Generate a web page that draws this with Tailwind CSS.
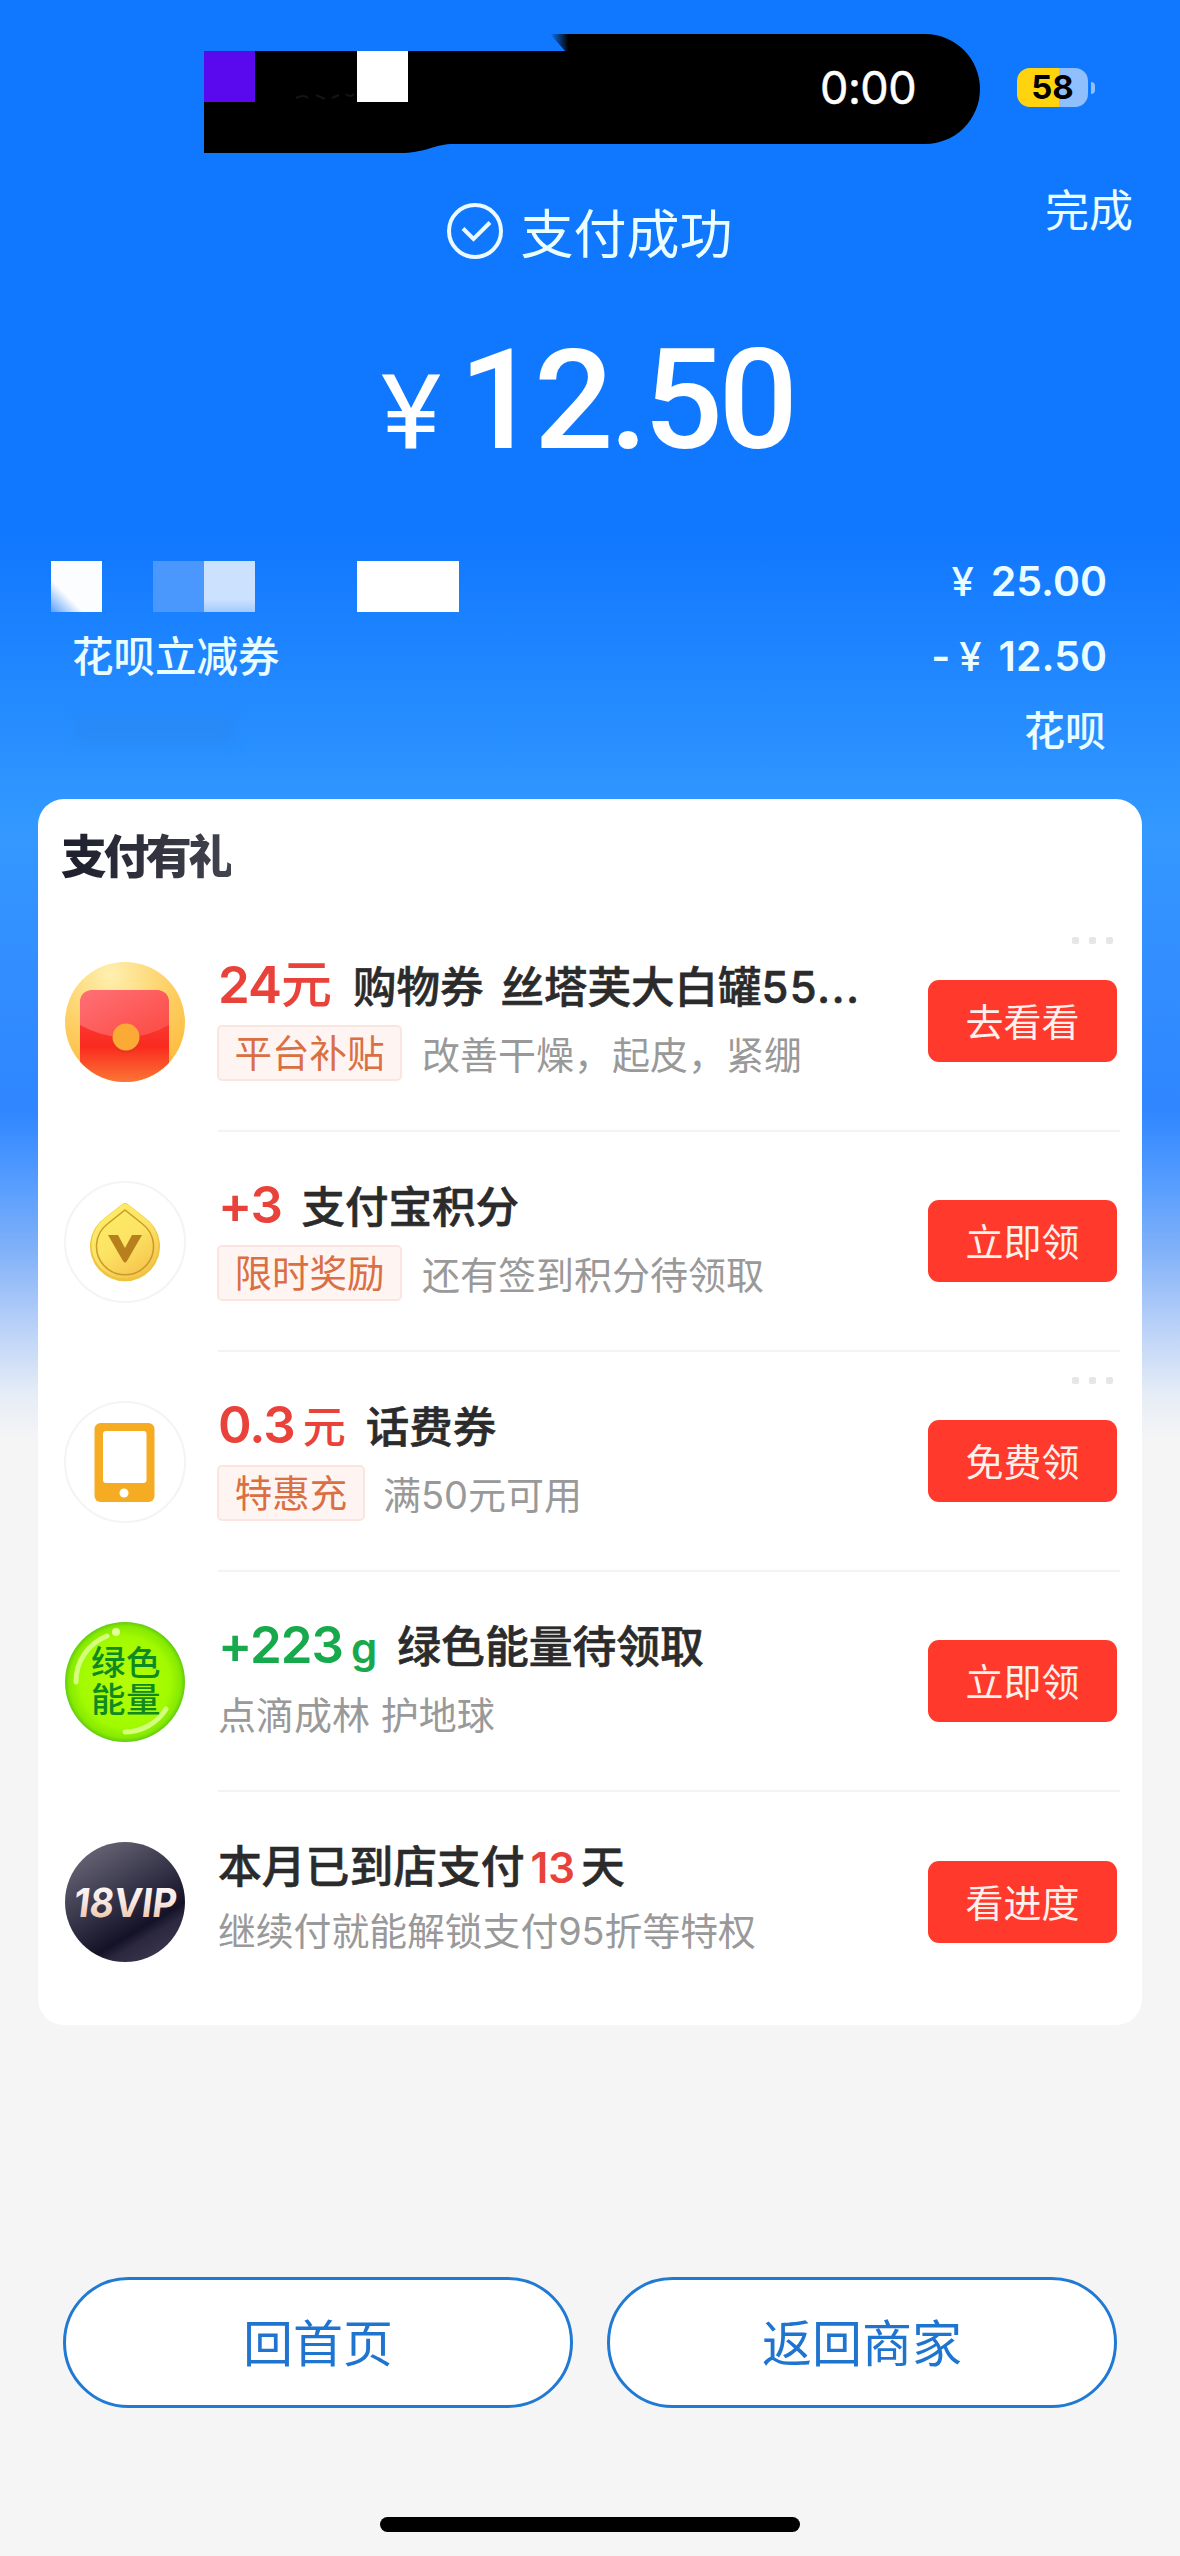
<!DOCTYPE html>
<html lang="zh-CN">
<head>
<meta charset="utf-8">
<title>支付成功</title>
<script src="https://cdn.jsdelivr.net/npm/@tailwindcss/browser@4"></script>
</head>
<body class="w-[1180px] h-[2556px] overflow-hidden bg-[#f5f5f5] font-['Inter','Noto_Sans_CJK_SC',sans-serif]">
<div class="flex h-[2556px] w-[1180px] flex-col bg-[linear-gradient(180deg,#1077ff_0px,#1077ff_530px,#3399ff_830px,#3391ff_920px,#2f86ff_1110px,#549cff_1180px,#80b1f8_1250px,#b5cef8_1320px,#e6edf6_1395px,#f5f5f5_1440px)]">

  <!-- status bar -->
  <div class="flex h-[160px]">
    <div class="relative ml-[204px] h-[160px] w-[780px]">
      <svg class="block" width="780" height="160" viewBox="0 0 780 160">
        <defs><linearGradient id="edge"><stop offset="0" stop-color="#000" stop-opacity="0"/><stop offset=".8"/></linearGradient></defs>
        <path d="M0 51H368V34H721a55 55 0 0 1 0 110H246C230 145 220 153 196 153H0Z" fill="#000"/>
        <path d="M346 34H369V52H362Z" fill="url(#edge)"/>
        <rect x="0" y="51" width="51" height="51" fill="#5a09ee"/>
        <rect x="153" y="51" width="51" height="51" fill="#fff"/>
        <path d="M92 98q8-4 12 0M112 95l9 4M128 98l7-3M142 94q4 4 8 0" stroke="#141414" stroke-width="2" fill="none"/>
      </svg>
      <span class="absolute left-[616px] top-[63px] text-[45px] leading-[50px] tracking-[-0.5px] text-white [-webkit-text-stroke:0.5px_white]">0:00</span>
    </div>
    <div class="ml-[33px] mt-[68px] flex h-[39px] items-center">
      <div class="flex h-[39px] w-[71px] items-center justify-center rounded-[13px] bg-[linear-gradient(90deg,#ffd40f_42px,#8fbffc_42px)] pt-px text-[33px] font-bold text-black">58</div>
      <div class="ml-[3px] h-[12px] w-[4px] rounded-r-full bg-[#8fbffc]"></div>
    </div>
  </div>

  <!-- result headline -->
  <div class="relative flex h-[140px] items-start justify-center">
    <div class="mt-[37px] flex items-center gap-[16px] pr-[3px]">
      <svg width="60" height="60" viewBox="0 0 60 60" fill="none" stroke="#eafaff"><circle cx="30" cy="30" r="26" stroke-width="4"/><path d="M18 27.500l10.500 10.500L45 21.500" stroke-width="4"/></svg>
      <span class="mt-[8px] text-[53px] leading-[60px] text-[#eafdff]">支付成功</span>
    </div>
    <span class="absolute left-[1045px] top-[21px] text-[44px] leading-[60px] text-[#eafdff]">完成</span>
  </div>
  <div class="flex h-[261px] items-baseline pl-[381px] font-['Roboto'] text-white">
    <span class="w-[66px] text-[104px] leading-[200px]"><span class="inline-block origin-left scale-x-110">¥</span></span>
    <span class="ml-[12px] text-[140px] font-medium leading-[200px] tracking-[-4.5px]">12.50</span>
  </div>

  <!-- payment breakdown -->
  <div class="flex h-[238px] justify-between font-medium text-[#eafdff]">
    <div class="flex flex-col pl-[51px]">
      <div class="flex h-[51px]">
        <div class="w-[51px] bg-[linear-gradient(45deg,#5a9ffb_0%,#fcfdff_32%)]"></div>
        <div class="ml-[51px] w-[51px] bg-[#4a98fe]"></div>
        <div class="w-[51px] bg-[linear-gradient(180deg,#cce1fd_75%,#a2cbff)]"></div>
        <div class="ml-[102px] w-[102px] bg-white"></div>
      </div>
      <div class="mt-[15px] ml-[21px] text-[41.5px] leading-[60px]">花呗立减券</div>
      <div class="mt-[28px] ml-[24px] h-[30px] w-[160px] bg-[#2a7cd8]/20 blur-[6px]"></div>
    </div>
    <div class="flex flex-col items-end pr-[73px] text-[41px]">
      <div class="-mt-[10px] h-[75px] leading-[60px] font-semibold"><span class="mr-[17px] text-[40px] font-medium">¥</span>25.00</div>
      <div class="h-[75px] leading-[60px] font-semibold"><span class="mr-[9px]">-</span><span class="mr-[17px] text-[40px] font-medium">¥</span>12.50</div>
      <div class="mr-[1px] leading-[60px]">花呗</div>
    </div>
  </div>

  <!-- rewards -->
  <div class="mx-[38px] flex h-[1226px] flex-col rounded-[26px] bg-white">
    <div class="h-[113px] pt-[27px] pl-[23px]"><span class="bg-[linear-gradient(90deg,#1d1e2c,#42444f)] bg-clip-text text-[46px] font-black leading-[60px] tracking-[-3.6px] text-transparent">支付有礼</span></div>

    <div class="relative flex h-[220px]">
      <svg class="ml-[26px] mt-[49px]" width="122" height="122" viewBox="-61 -61 122 122">
        <defs>
          <radialGradient id="g1" cx=".38" cy=".1" r=".9"><stop offset="0" stop-color="#fff0b0"/><stop offset=".5" stop-color="#fdd36c"/><stop offset="1" stop-color="#fdbb3c"/></radialGradient>
          <linearGradient id="g2" x2="0" y2="1"><stop offset="0" stop-color="#fb4a48"/><stop offset=".6" stop-color="#fa2a20"/><stop offset="1" stop-color="#fb7a36"/></linearGradient>
          <linearGradient id="g3" x2="1" y2="1"><stop offset="0" stop-color="#ff7076"/><stop offset="1" stop-color="#fb4a42"/></linearGradient>
          <clipPath id="k1"><circle r="60"/></clipPath>
        </defs>
        <circle r="60" fill="url(#g1)"/>
        <g clip-path="url(#k1)"><path d="M-45 62V-18q0-14 14-14H30q14 0 14 14V62Z" fill="url(#g2)"/><path d="M-45 3V-18q0-14 14-14H30q14 0 14 14V3Q0 28-45 3Z" fill="url(#g3)"/></g>
        <circle cx="1" cy="17" r="14" fill="#d8391a" opacity=".5"/><circle cx="1" cy="15" r="13.500" fill="#fbab35"/>
      </svg>
      <div class="ml-[32px] flex w-[902px] flex-col border-b-2 border-[#f3f3f3] pt-[43px]">
        <div class="flex h-[60px] items-baseline leading-[60px]"><span class="text-[51px] font-semibold tracking-[-1px] text-[#e8423a]">24<span class="font-medium">元</span></span><span class="ml-[22px] text-[43.5px] font-medium text-[#2b2b2b] [-webkit-text-stroke:0.6px_#2b2b2b]">购物券<span class="ml-[17px]">丝塔芙大白罐</span><span class="tracking-[1.4px]">55...</span></span></div>
        <div class="mt-[10px] flex h-[56px] items-center text-[38px] text-[#999]"><span class="-ml-px flex h-[56px] w-[185px] items-center justify-center rounded-[5px] border-2 border-[#fbe6df] bg-[#fef4f1] pt-[3px] text-[37.5px] text-[#d96f43]">平台补贴</span><span class="ml-[20px] pt-[4px]">改善干燥，起皮，紧绷</span></div>
      </div>
      <button class="absolute left-[890px] top-[68px] h-[82px] w-[189px] rounded-[11px] bg-[#ff392b] pt-[3px] text-[38px] text-[#fff0ec]">去看看</button>
      <div class="absolute left-[1034px] top-[25px] flex gap-[10px]"><i class="size-[7px] rounded-[2px] bg-[#e6e6e6]"></i><i class="size-[7px] rounded-[2px] bg-[#e6e6e6]"></i><i class="size-[7px] rounded-[2px] bg-[#e6e6e6]"></i></div>
    </div>

    <div class="relative flex h-[220px]">
      <svg class="ml-[26px] mt-[49px]" width="122" height="122" viewBox="-61 -61 122 122">
        <defs><linearGradient id="g4" x1=".2" x2=".8" y2="1"><stop offset="0" stop-color="#fcee64"/><stop offset=".5" stop-color="#fce364"/><stop offset="1" stop-color="#f5c04a"/></linearGradient></defs>
        <circle r="60" fill="#fff" stroke="#f4f4f4" stroke-width="2"/>
        <path d="M-4-37Q0-41 4-37L20-24.500A35 35 0 1 1-20-24.500Z" fill="#eec43f"/>
        <path d="M-4-36.500Q0-40 4-36.500L20-24A33.500 33.500 0 1 1-20-24Z" fill="url(#g4)"/>
        <path d="M0-32L17-18.500A28.500 28.500 0 1 1-17-18.500Z" fill="none" stroke="#c99a2c" stroke-width="1.500"/>
        <path d="M-17-7H-7L0 6 7-7H17L2 19Q0 22-2 19Z" fill="#b8801c"/>
      </svg>
      <div class="ml-[32px] flex w-[902px] flex-col border-b-2 border-[#f3f3f3] pt-[43px]">
        <div class="flex h-[60px] items-baseline leading-[60px]"><span class="text-[51px] font-semibold tracking-[-1.5px] text-[#e8423a]">+3</span><span class="ml-[20px] text-[43.5px] font-medium text-[#2b2b2b] [-webkit-text-stroke:0.6px_#2b2b2b]">支付宝积分</span></div>
        <div class="mt-[10px] flex h-[56px] items-center text-[38px] text-[#999]"><span class="-ml-px flex h-[56px] w-[185px] items-center justify-center rounded-[5px] border-2 border-[#fbe6df] bg-[#fef4f1] pt-[3px] text-[37.5px] text-[#d96f43]">限时奖励</span><span class="ml-[20px] pt-[4px]">还有签到积分待领取</span></div>
      </div>
      <button class="absolute left-[890px] top-[68px] h-[82px] w-[189px] rounded-[11px] bg-[#ff392b] pt-[3px] text-[38px] text-[#fff0ec]">立即领</button>
    </div>

    <div class="relative flex h-[220px]">
      <svg class="ml-[26px] mt-[49px]" width="122" height="122" viewBox="-61 -61 122 122">
        <circle r="60" fill="#fff" stroke="#f4f4f4" stroke-width="2"/>
        <rect x="-30.500" y="-39" width="60" height="79" rx="6" fill="#f5ac22"/><rect x="-22" y="-31" width="43.500" height="52" rx="3" fill="#fff"/><circle cx="-1" cy="31" r="4.500" fill="#fff"/>
      </svg>
      <div class="ml-[32px] flex w-[902px] flex-col border-b-2 border-[#f3f3f3] pt-[43px]">
        <div class="flex h-[60px] items-baseline leading-[60px]"><span class="text-[51px] font-semibold tracking-[-1px] text-[#e8423a]">0.3</span><span class="ml-[8px] text-[43px] font-medium text-[#e8423a]">元</span><span class="ml-[20px] text-[43.5px] font-medium text-[#2b2b2b] [-webkit-text-stroke:0.6px_#2b2b2b]">话费券</span></div>
        <div class="mt-[10px] flex h-[56px] items-center text-[38px] text-[#999]"><span class="-ml-px flex h-[56px] w-[148px] items-center justify-center rounded-[5px] border-2 border-[#fbe6df] bg-[#fef4f1] pt-[3px] text-[37.5px] text-[#d96f43]">特惠充</span><span class="ml-[18px] pt-[4px]">满50元可用</span></div>
      </div>
      <button class="absolute left-[890px] top-[68px] h-[82px] w-[189px] rounded-[11px] bg-[#ff392b] pt-[3px] text-[38px] text-[#fff0ec]">免费领</button>
      <div class="absolute left-[1034px] top-[25px] flex gap-[10px]"><i class="size-[7px] rounded-[2px] bg-[#e6e6e6]"></i><i class="size-[7px] rounded-[2px] bg-[#e6e6e6]"></i><i class="size-[7px] rounded-[2px] bg-[#e6e6e6]"></i></div>
    </div>

    <div class="relative flex h-[220px]">
      <svg class="ml-[26px] mt-[49px]" width="122" height="122" viewBox="-61 -61 122 122">
        <defs><radialGradient id="g5" cx=".5" cy=".5" r=".5"><stop offset="0" stop-color="#b4ff08"/><stop offset=".75" stop-color="#a2fa00"/><stop offset=".93" stop-color="#86ea00"/><stop offset="1" stop-color="#62cc10"/></radialGradient></defs>
        <circle r="60" fill="url(#g5)"/>
        <path d="M-49 0A49 49 0 0 1-18-46M41 27A49 49 0 0 1 0 50" fill="none" stroke="#d4ff7c" stroke-width="5" stroke-linecap="round"/><circle cx="-9" cy="-50" r="4" fill="#e2ff9a"/>
        <text x="-34" y="-7" font-size="34.500" font-weight="500" letter-spacing=".5" fill="#0f8a22">绿色</text><text x="-34" y="30" font-size="34.500" font-weight="500" letter-spacing=".5" fill="#0f8a22">能量</text>
      </svg>
      <div class="ml-[32px] flex w-[902px] flex-col border-b-2 border-[#f3f3f3] pt-[43px]">
        <div class="flex h-[60px] items-baseline leading-[60px]"><span class="text-[51px] font-semibold tracking-[-1px] text-[#17a94b]">+223</span><span class="ml-[8px] text-[42px] font-semibold text-[#17a94b]">g</span><span class="ml-[20px] text-[43.8px] font-medium text-[#2b2b2b] [-webkit-text-stroke:0.6px_#2b2b2b]">绿色能量待领取</span></div>
        <div class="mt-[11px] flex h-[56px] items-center pt-[3px] text-[38px] text-[#999]">点滴成林 护地球</div>
      </div>
      <button class="absolute left-[890px] top-[68px] h-[82px] w-[189px] rounded-[11px] bg-[#ff392b] pt-[3px] text-[38px] text-[#fff0ec]">立即领</button>
    </div>

    <div class="relative flex h-[220px]">
      <svg class="ml-[26px] mt-[49px]" width="122" height="122" viewBox="-61 -61 122 122">
        <defs><linearGradient id="g6" x1=".2" x2=".8" y2="1"><stop offset="0" stop-color="#6a6878"/><stop offset=".45" stop-color="#353347"/><stop offset=".72" stop-color="#141226"/><stop offset=".8" stop-color="#2b2840"/><stop offset="1" stop-color="#3b3850"/></linearGradient>
        <linearGradient id="g7" x2="0" y2="1"><stop offset="0" stop-color="#fff"/><stop offset=".5" stop-color="#f6e6e2"/><stop offset="1" stop-color="#edb592"/></linearGradient></defs>
        <circle r="60" fill="url(#g6)"/>
        <text transform="skewX(-7)" x="-51" y="15" font-size="40" font-weight="700" textLength="103" lengthAdjust="spacingAndGlyphs" fill="url(#g7)">18VIP</text>
      </svg>
      <div class="ml-[32px] flex w-[902px] flex-col pt-[46px]">
        <div class="flex h-[60px] items-baseline leading-[60px] text-[43.8px] font-medium text-[#2b2b2b] [-webkit-text-stroke:0.6px_#2b2b2b]"><span>本月已到店支付</span><span class="mx-[6px] text-[42px] font-semibold text-[#e8423a] [-webkit-text-stroke:0px]">13</span><span>天</span></div>
        <div class="mt-[5px] flex h-[56px] items-center text-[37.8px] text-[#999]">继续付就能解锁支付95折等特权</div>
      </div>
      <button class="absolute left-[890px] top-[69px] h-[82px] w-[189px] rounded-[11px] bg-[#ff392b] pt-[3px] text-[38px] text-[#fff0ec]">看进度</button>
    </div>
  </div>

  <!-- actions -->
  <div class="mt-[252px] flex gap-[34px] px-[63px] text-[50px] text-[#1f74d0]">
    <button class="h-[131px] flex-1 rounded-full border-3 border-[#2079d2] bg-white pt-[3px]">回首页</button>
    <button class="h-[131px] flex-1 rounded-full border-3 border-[#2079d2] bg-white pt-[3px]">返回商家</button>
  </div>
  <div class="mx-auto mt-[109px] h-[15px] w-[420px] rounded-full bg-black"></div>
</div>
</body>
</html>
